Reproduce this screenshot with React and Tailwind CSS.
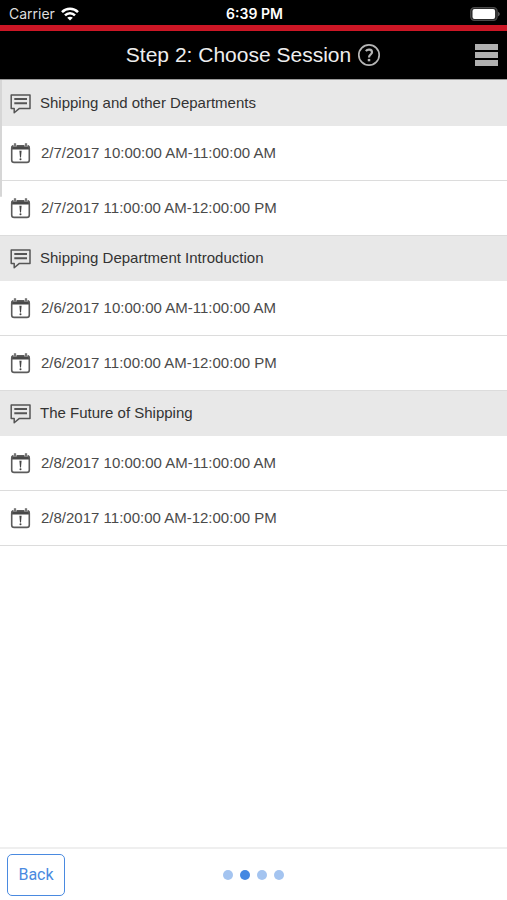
const sessions = [
  { title: "Shipping and other Departments", date: "2/7/2017" },
  { title: "Shipping Department Introduction", date: "2/6/2017" },
  { title: "The Future of Shipping", date: "2/8/2017" },
];
const times = ["10:00:00 AM-11:00:00 AM", "11:00:00 AM-12:00:00 PM"];

function WifiIcon() {
  return (
    <svg viewBox="0 0 18 14" className="h-[14px] w-[18px]" fill="none" stroke="#fff" strokeWidth="2.5" aria-hidden="true">
      <path d="M1 5.2C5.4 .7 12.6 .7 17 5.2" />
      <path d="M4 8.3C6.8 5.4 11.2 5.4 14 8.3" />
      <path d="M9 13.6 6.2 10.7C7.8 9.3 10.2 9.3 11.8 10.7Z" fill="#fff" stroke="none" />
    </svg>
  );
}

function BatteryIcon() {
  return (
    <svg viewBox="0 0 30 14" className="h-[14px] w-[30px]" aria-hidden="true">
      <rect x="0.7" y="0.7" width="26.4" height="12.6" rx="3.6" fill="#222" stroke="#4c4c4c" strokeWidth="1.2" />
      <rect x="2.5" y="2" width="22.6" height="10" rx="2" fill="#fff" />
      <path d="M28.2 4.7c1.9.8 1.9 3.8 0 4.6z" fill="#6c6c6c" />
    </svg>
  );
}

function CommentIcon() {
  return (
    <svg viewBox="0 0 22 20" className="h-[20px] w-[22px] shrink-0" fill="none" stroke="#555" aria-hidden="true">
      <path d="M1.2 1H20V14.4H9.4L4.2 18.8V14.4H1.2Z" strokeWidth="1.5" strokeLinejoin="round" />
      <path d="M4.3 5H17M4.3 9.2H17" strokeWidth="2" />
    </svg>
  );
}

function CalendarIcon() {
  return (
    <svg viewBox="0 0 21 21" className="h-[21px] w-[21px] shrink-0" fill="none" aria-hidden="true">
      <path d="M3.5 2.2H17.5C18.9 2.2 19.5 3 19.5 4.2V6.5H1.5V4.2C1.5 3 2.1 2.2 3.5 2.2Z" fill="#484848" />
      <rect x="1.7" y="2.8" width="17.6" height="16.6" rx="2.4" stroke="#5c5c5c" strokeWidth="1.6" />
      <path d="M5 .2V3.6M16 .2V3.6" stroke="#ddd" strokeWidth="3.2" />
      <path d="M5 .2V3.4M16 .2V3.4" stroke="#666" strokeWidth="1.7" />
      <path d="M9.4 7.8H11.6L11 14.4H10Z" fill="#444" />
      <circle cx="10.5" cy="16.3" r="1" fill="#444" />
    </svg>
  );
}

function HelpIcon() {
  return (
    <svg viewBox="0 0 24 24" className="size-6" fill="none" stroke="#b5b5b5" aria-hidden="true">
      <circle cx="12" cy="12" r="10.2" strokeWidth="1.7" />
      <path d="M8.9 8.1C10.4 6 15 6.1 15 9.2C15 11.5 12 11.6 12 14.4" strokeWidth="2.2" />
      <path d="M12 15.9V18.3" strokeWidth="2.5" />
    </svg>
  );
}

export default function App() {
  return (
    <div className="flex min-h-screen flex-col bg-white font-['Liberation_Sans',Arial,sans-serif]">
      <div className="grid h-[25px] grid-cols-3 items-center bg-black pr-[7px] pl-[9px] font-['Inter',sans-serif] text-[14px] leading-5 text-white">
        <div className="flex items-center gap-[6px] pt-[2px]">
          <span className="text-[#ddd]">Carrier</span>
          <WifiIcon />
        </div>
        <span className="pt-[2px] text-center font-semibold">6:39 PM</span>
        <div className="flex justify-end pt-[2px]">
          <BatteryIcon />
        </div>
      </div>

      <header className="grid h-[55px] grid-cols-[32px_1fr_32px] items-center border-t-[6px] border-b border-t-[#cb1625] border-b-[#999] bg-black px-[9px]">
        <div className="col-start-2 flex items-center justify-center gap-[6px]">
          <h1 className="text-[21px] leading-6 whitespace-nowrap text-[#eee]">Step 2: Choose Session</h1>
          <button type="button" aria-label="Help">
            <HelpIcon />
          </button>
        </div>
        <button type="button" aria-label="Menu" className="flex w-[23px] flex-col gap-[2px] justify-self-end">
          <span className="h-[6px] bg-[#b0b0b0]" />
          <span className="h-[6px] bg-[#b0b0b0]" />
          <span className="h-[6px] bg-[#b0b0b0]" />
        </button>
      </header>

      <main className="relative flex-1 border-t border-[#e8e8e8]">
        <div className="absolute -top-px left-0 h-[117px] w-[2px] rounded-b bg-[#d6d6d6]" />
        {sessions.map((session) => (
          <section key={session.title}>
            <h2 className="flex h-[45px] items-center gap-[8px] bg-[#e8e8e8] pl-[10px] text-[15px] text-[#333]">
              <CommentIcon />
              <span>{session.title}</span>
            </h2>
            <ul>
              {times.map((time) => (
                <li key={time} className="border-b border-[#dcdcdc]">
                  <button type="button" className="flex h-[54px] w-full items-center gap-[10px] pl-[10px] text-left text-[15px] text-[#4a4a4a]">
                    <CalendarIcon />
                    <span>{session.date} {time}</span>
                  </button>
                </li>
              ))}
            </ul>
          </section>
        ))}
      </main>

      <footer className="grid h-[53px] grid-cols-3 items-center border-t-2 border-[#efefef] px-[7px]">
        <button type="button" className="h-[42px] w-[58px] rounded-[5px] border border-[#4a8ae0] font-['Roboto',sans-serif] text-[16px] text-[#4a8ae0]">
          Back
        </button>
        <div className="flex justify-center gap-[7px]">
          <span className="size-[10px] rounded-full bg-[#a4c4f0]" />
          <span className="size-[10px] rounded-full bg-[#4488e2]" />
          <span className="size-[10px] rounded-full bg-[#a4c4f0]" />
          <span className="size-[10px] rounded-full bg-[#a4c4f0]" />
        </div>
      </footer>
    </div>
  );
}
